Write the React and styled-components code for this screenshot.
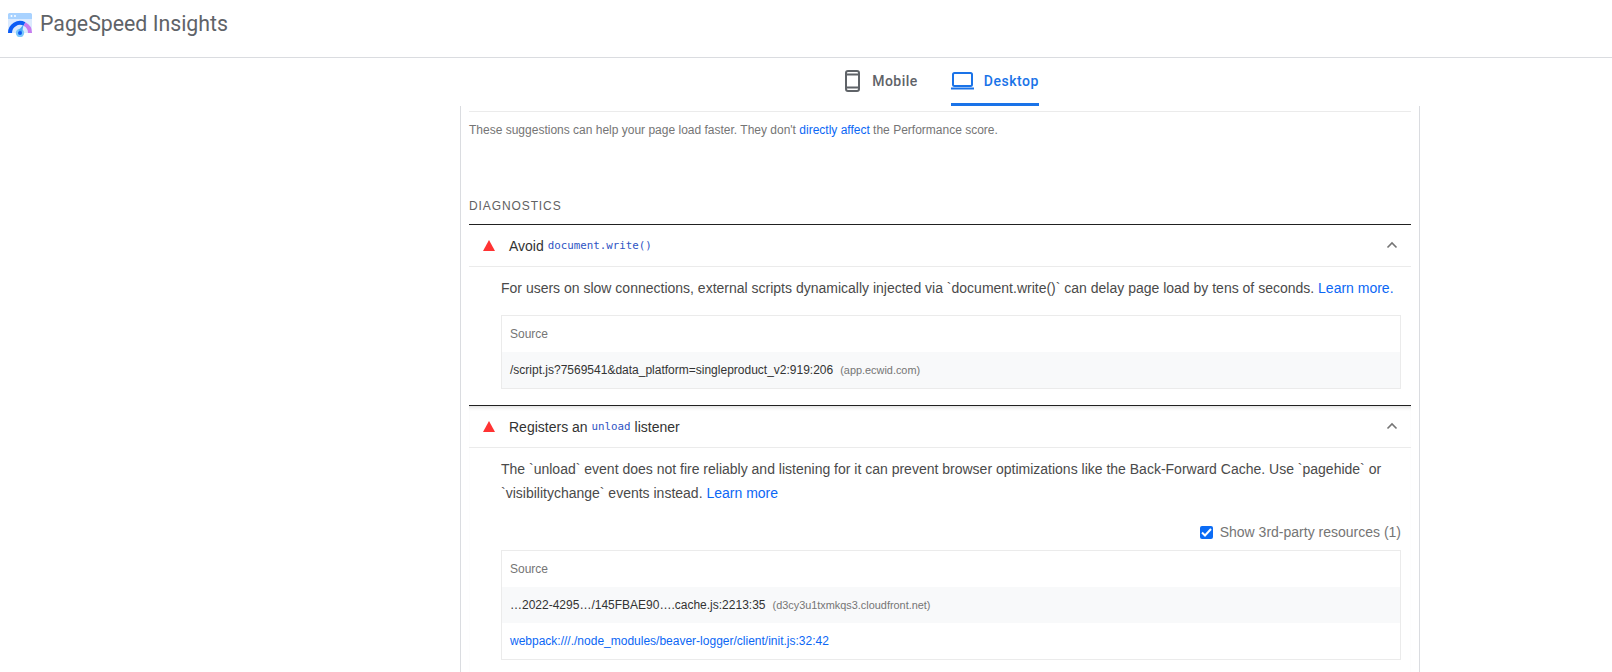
import React from 'react'
import styled, { createGlobalStyle } from 'styled-components'

const GlobalStyle = createGlobalStyle`
  html, body { margin: 0; padding: 0; background: #fff; overflow: hidden; }
  body { font-family: "Liberation Sans", Arial, sans-serif; }
`

const Header = styled.header`
  height: 44px;
  border-bottom: 1px solid #dadce0;
  display: flex;
  align-items: flex-start;
  padding: 13px 0 0 8px;
`
const Title = styled.div`
  font-family: Roboto, sans-serif;
  font-size: 21.3px;
  line-height: 22px;
  color: #5f6368;
  margin-left: 8px;
`
const Tabs = styled.nav`
  display: flex;
  justify-content: center;
  gap: 33px;
  height: 48px;
  padding-left: 272px;
`
const Tab = styled.div`
  height: 48px;
  box-sizing: border-box;
  display: flex;
  align-items: center;
  gap: 10px;
  font-family: Roboto, sans-serif;
  font-weight: 500;
  font-size: 14px;
  letter-spacing: 0.5px;
  color: ${p => (p.$active ? '#1a73e8' : '#5f6368')};
  border-bottom: 3px solid ${p => (p.$active ? '#1a73e8' : 'transparent')};
`
const Panel = styled.main`
  width: 942px;
  margin-left: 460px;
  padding: 5px 8px 0;
  border-left: 1px solid #dadce0;
  border-right: 1px solid #dadce0;
  height: 563px;
`
const Intro = styled.div`
  border-top: 1px solid #ebebeb;
  padding-top: 9px;
  font-size: 12px;
  line-height: 18px;
  color: #757575;
  height: 77px;
`
const Link = styled.a`
  color: #0b67f5;
`
const GroupTitle = styled.div`
  font-size: 12px;
  letter-spacing: 0.9px;
  line-height: 16px;
  color: #616161;
  padding-bottom: 10px;
`
const Audit = styled.section`
  border-top: 1px solid #212121;
  padding-bottom: 16px;
  box-shadow: ${p => (p.$shadow ? 'inset 0 4px 4px -3px rgba(0,0,0,0.16)' : 'none')};
`
const AuditHead = styled.div`
  display: flex;
  align-items: center;
  height: 41px;
  border-bottom: 1px solid #ebebeb;
  padding: 0 13px 0 14px;
  font-size: 14px;
  color: #333;
`
const Triangle = styled.span`
  width: 0;
  height: 0;
  border-left: 6px solid transparent;
  border-right: 6px solid transparent;
  border-bottom: 11px solid #ff3333;
  margin-right: 14px;
`
const Code = styled.code`
  font-family: "DejaVu Sans Mono", monospace;
  font-size: 10.8px;
  color: #2f55c4;
  margin: 0 4px;
`
const Chevron = styled.svg`
  margin-left: auto;
  width: 12px;
  height: 8px;
  margin-bottom: 2px;
`
const Description = styled.p`
  margin: 0;
  padding: 9px 0 0 32px;
  font-size: 14px;
  line-height: 24px;
  color: #4a4a4a;
`
const ThirdParty = styled.label`
  display: flex;
  align-items: center;
  justify-content: flex-end;
  gap: 7px;
  margin: 18px 10px 9px 0;
  font-size: 14px;
  line-height: 18px;
  color: #757575;
`
const CheckBox = styled.span`
  width: 13px;
  height: 13px;
  border-radius: 2px;
  background: #0b6cf5;
  display: flex;
  align-items: center;
  justify-content: center;
`
const Table = styled.div`
  margin: ${p => p.$top || 0}px 10px 0 32px;
  border: 1px solid #ebebeb;
  font-size: 12px;
`
const Row = styled.div`
  height: 36px;
  display: flex;
  align-items: center;
  gap: 7px;
  padding: 0 8px;
  color: ${p => (p.$head ? '#757575' : '#333')};
  background: ${p => (p.$shaded ? '#f8f9fa' : '#fff')};
`
const Host = styled.span`
  font-size: 10.9px;
  color: #757575;
`

const Logo = () => (
  <svg width="24" height="24" viewBox="0 0 24 24">
    <path d="M0 1.5A1.5 1.5 0 0 1 1.5 0h21A1.5 1.5 0 0 1 24 1.5V6H0z" fill="#a8d2ff" />
    <rect y="6" width="24" height="14" fill="#dbeafe" />
    <circle cx="3.5" cy="3" r="1" fill="#fff" />
    <circle cx="7" cy="3" r="1" fill="#fff" />
    <path d="M2 20A10 10 0 0 1 16.5 11" fill="none" stroke="#0b5cf5" strokeWidth="4" />
    <path d="M16.5 11A10 10 0 0 1 22 20" fill="none" stroke="#c77bee" strokeWidth="4" />
    <circle cx="12" cy="20" r="4.2" fill="#7cc8fb" />
    <path d="M10.5 17.5l5-6-1.5 8z" fill="#4aa8f5" />
    <circle cx="12" cy="20" r="2" fill="#0b5cf5" />
  </svg>
)

const Phone = () => (
  <svg width="17" height="22" viewBox="0 0 17 22" fill="none" stroke="#5f6368" strokeWidth="2">
    <rect x="1" y="1" width="13" height="20" rx="2" />
    <path d="M1 4.5h13M1 17.5h13" />
  </svg>
)

const Laptop = () => (
  <svg width="23" height="18" viewBox="0 0 23 18" fill="none" stroke="#1a73e8" strokeWidth="2">
    <rect x="2" y="1" width="19" height="13" rx="1.5" />
    <path d="M0 16.5h23" />
  </svg>
)

const Up = () => (
  <Chevron viewBox="0 0 12 8" fill="none" stroke="#757575" strokeWidth="1.6">
    <path d="M1.5 6.5L6 2l4.5 4.5" />
  </Chevron>
)

const Check = () => (
  <svg width="11" height="9" viewBox="0 0 11 9" fill="none" stroke="#fff" strokeWidth="2">
    <path d="M1 4.5l3 3 6-6.5" />
  </svg>
)

export default function App() {
  return (
    <>
      <GlobalStyle />
      <Header>
        <Logo />
        <Title>PageSpeed Insights</Title>
      </Header>
      <Tabs>
        <Tab><Phone />Mobile</Tab>
        <Tab $active><Laptop />Desktop</Tab>
      </Tabs>
      <Panel>
        <Intro>
          These suggestions can help your page load faster. They don't <Link>directly affect</Link> the Performance score.
        </Intro>
        <GroupTitle>DIAGNOSTICS</GroupTitle>
        <Audit>
          <AuditHead>
            <Triangle />Avoid <Code>document.write()</Code><Up />
          </AuditHead>
          <Description>
            For users on slow connections, external scripts dynamically injected via `document.write()` can delay page load by tens of seconds. <Link>Learn more.</Link>
          </Description>
          <Table $top={15}>
            <Row $head>Source</Row>
            <Row $shaded>/script.js?7569541&amp;data_platform=singleproduct_v2:919:206 <Host>(app.ecwid.com)</Host></Row>
          </Table>
        </Audit>
        <Audit $shadow>
          <AuditHead>
            <Triangle />Registers an <Code>unload</Code> listener<Up />
          </AuditHead>
          <Description>
            The `unload` event does not fire reliably and listening for it can prevent browser optimizations like the Back-Forward Cache. Use `pagehide` or `visibilitychange` events instead. <Link>Learn more</Link>
          </Description>
          <ThirdParty><CheckBox><Check /></CheckBox>Show 3rd-party resources (1)</ThirdParty>
          <Table>
            <Row $head>Source</Row>
            <Row $shaded>…2022-4295…/145FBAE90….cache.js:2213:35 <Host>(d3cy3u1txmkqs3.cloudfront.net)</Host></Row>
            <Row><Link>webpack:///./node_modules/beaver-logger/client/init.js:32:42</Link></Row>
          </Table>
        </Audit>
      </Panel>
    </>
  )
}
